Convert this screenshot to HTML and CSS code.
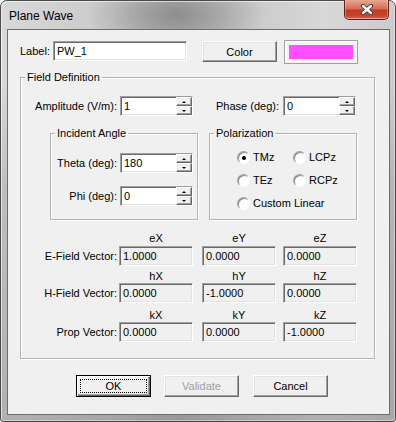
FILE: index.html
```html
<!DOCTYPE html>
<html lang="en">
<head>
    <meta charset="UTF-8">
    <title>Plane Wave</title>
    <link rel="stylesheet" href="styles.css">
</head>
<body>

    <div class="window">
        <div class="titlebar">
            <span class="title">Plane Wave</span>
            <div class="close">
                <svg width="14" height="11" viewBox="0 0 14 11">
                    <path d="M3 2 L11 9 M11 2 L3 9" stroke="#3b3b3b" stroke-width="4.2" stroke-linecap="round"/>
                    <path d="M3 2 L11 9 M11 2 L3 9" stroke="#ffffff" stroke-width="2.4" stroke-linecap="round"/>
                </svg>
            </div>
        </div>

        <div class="client">
            <div class="top-row">
                <span class="lbl lbl-label">Label:</span>
                <div class="edit edit-label">PW_1</div>
                <div class="btn btn-color">Color</div>
                <div class="swatch"><div class="swatch-fill"></div></div>
            </div>

            <fieldset class="group field-def">
                <legend>Field Definition</legend>

                <div class="amp-row">
                    <span class="lbl lbl-amp">Amplitude (V/m):</span>
                    <div class="edit spin">
                        <span class="spin-val">1</span>
                        <div class="spin-btns">
                            <div class="spin-btn"><i class="arrow-up"></i></div>
                            <div class="spin-btn"><i class="arrow-down"></i></div>
                        </div>
                    </div>
                    <span class="lbl lbl-phase">Phase (deg):</span>
                    <div class="edit spin spin-phase">
                        <span class="spin-val">0</span>
                        <div class="spin-btns">
                            <div class="spin-btn"><i class="arrow-up"></i></div>
                            <div class="spin-btn"><i class="arrow-down"></i></div>
                        </div>
                    </div>
                </div>

                <div class="group-row">
                    <fieldset class="group incident">
                        <legend>Incident Angle</legend>
                        <div class="ia-row">
                            <span class="lbl lbl-ia">Theta (deg):</span>
                            <div class="edit spin">
                                <span class="spin-val">180</span>
                                <div class="spin-btns">
                                    <div class="spin-btn"><i class="arrow-up"></i></div>
                                    <div class="spin-btn"><i class="arrow-down"></i></div>
                                </div>
                            </div>
                        </div>
                        <div class="ia-row">
                            <span class="lbl lbl-ia">Phi (deg):</span>
                            <div class="edit spin">
                                <span class="spin-val">0</span>
                                <div class="spin-btns">
                                    <div class="spin-btn"><i class="arrow-up"></i></div>
                                    <div class="spin-btn"><i class="arrow-down"></i></div>
                                </div>
                            </div>
                        </div>
                    </fieldset>

                    <fieldset class="group polar">
                        <legend>Polarization</legend>
                        <div class="radios">
                            <div class="radio"><span class="dot checked"></span>TMz</div>
                            <div class="radio"><span class="dot"></span>LCPz</div>
                            <div class="radio"><span class="dot"></span>TEz</div>
                            <div class="radio"><span class="dot"></span>RCPz</div>
                            <div class="radio wide"><span class="dot"></span>Custom Linear</div>
                        </div>
                    </fieldset>
                </div>

                <div class="vec-head head-e">
                    <span></span><span>eX</span><span>eY</span><span>eZ</span>
                </div>
                <div class="vec-row">
                    <span class="vec-lbl">E-Field Vector:</span>
                    <div class="edit ro">1.0000</div>
                    <div class="edit ro">0.0000</div>
                    <div class="edit ro">0.0000</div>
                </div>

                <div class="vec-head head-h">
                    <span></span><span>hX</span><span>hY</span><span>hZ</span>
                </div>
                <div class="vec-row">
                    <span class="vec-lbl">H-Field Vector:</span>
                    <div class="edit ro">0.0000</div>
                    <div class="edit ro">-1.0000</div>
                    <div class="edit ro">0.0000</div>
                </div>

                <div class="vec-head head-k">
                    <span></span><span>kX</span><span>kY</span><span>kZ</span>
                </div>
                <div class="vec-row">
                    <span class="vec-lbl">Prop Vector:</span>
                    <div class="edit ro">0.0000</div>
                    <div class="edit ro">0.0000</div>
                    <div class="edit ro">-1.0000</div>
                </div>
            </fieldset>

            <div class="btn-row">
                <div class="btn btn-default"><span class="focus">OK</span></div>
                <div class="btn btn-disabled">Validate</div>
                <div class="btn btn-cancel">Cancel</div>
            </div>
        </div>
    </div>

</body>
</html>
```

FILE: styles.css
```css
body {
    margin: 0;
    font-family: "Liberation Sans", Arial, sans-serif;
    font-size: 11px;
    color: #000;
    background: #fff;
}

/* window frame */
.window {
    width: 396px;
    height: 422px;
    box-sizing: border-box;
    border: 1px solid #4a4a4a;
    border-radius: 7px 7px 3px 3px;
    padding: 0 5px 6px 6px;
    display: flex;
    flex-direction: column;
    background:
        radial-gradient(ellipse 90px 40px at 175px 14px, rgba(135, 135, 135, 0.85), rgba(135, 135, 135, 0)),
        linear-gradient(to bottom, rgba(0, 0, 0, 0) 20%, rgba(0, 0, 0, 0.12) 45%, rgba(0, 0, 0, 0.18)),
        linear-gradient(to right, #d8d8d8, #cacaca 28%, #b8b8b8 45%, #c9c9c9 62%, #d8d8d8 82%, #cccccc);
    box-shadow: inset 1px 1px rgba(255, 255, 255, 0.6), inset -1px -1px rgba(255, 255, 255, 0.4);
}
.titlebar {
    height: 28px;
    display: flex;
    align-items: flex-start;
}
.title {
    font-size: 12px;
    line-height: 14px;
    margin: 8px 0 0 2px;
    color: #000;
}
.close {
    margin: -1px 1px 0 auto;
    width: 45px;
    height: 20px;
    box-sizing: border-box;
    border: 1px solid #5e2218;
    border-top: none;
    border-radius: 0 0 5px 5px;
    background: linear-gradient(to bottom, #e7a796, #d36e58 45%, #c23a22 55%, #c8462c 85%, #d9735a);
    box-shadow: inset 0 -1px rgba(255, 255, 255, 0.35), inset 1px 0 rgba(255, 255, 255, 0.3), inset -1px 0 rgba(255, 255, 255, 0.3);
    display: flex;
    align-items: center;
    justify-content: center;
}
.client {
    flex: 1;
    border: 1px solid #6e6e6e;
    background: #f0f0f0;
}

/* common controls */
.lbl {
    line-height: 20px;
    white-space: nowrap;
}
.edit {
    height: 20px;
    box-sizing: border-box;
    border: 1px solid;
    border-color: #a0a0a0 #fff #fff #a0a0a0;
    box-shadow: inset 1px 1px #696969, inset -1px -1px #e3e3e3;
    background: #fff;
    padding: 0 3px;
    line-height: 18px;
    white-space: nowrap;
}
.edit.ro {
    background: #f0f0f0;
    width: 74px;
}
.btn {
    height: 22px;
    box-sizing: border-box;
    width: 75px;
    border: 1px solid;
    border-color: #fff #696969 #696969 #fff;
    box-shadow: inset -1px -1px #a0a0a0, inset 1px 1px #e3e3e3;
    background: #f0f0f0;
    display: flex;
    align-items: center;
    justify-content: center;
}
.group {
    margin: 0;
    padding: 0;
    min-width: 0;
    box-sizing: border-box;
    border: 1px solid #b4b4b4;
    box-shadow: 1px 1px #fff, inset 1px 1px #fff;
}
.group legend {
    margin-left: 4px;
    padding: 0 2px;
    line-height: 13px;
}

/* label row */
.top-row {
    display: flex;
    align-items: flex-start;
    margin: 11px 0 0 12px;
}
.lbl-label {
    width: 33px;
}
.edit-label {
    width: 134px;
}
.btn-color {
    margin-left: 15px;
    height: 21px;
}
.swatch {
    margin: -1px 0 0 7px;
    width: 74px;
    height: 24px;
    box-sizing: border-box;
    border: 1px solid #a0a0a0;
    box-shadow: inset 1px 1px #fff;
    background: #f4f4f4;
    padding: 4px;
}
.swatch-fill {
    height: 100%;
    background: #ff4fff;
}

/* field definition */
.field-def {
    margin: 7px 0 0 12px;
    width: 355px;
    padding-bottom: 16px;
}
.amp-row {
    display: flex;
    margin-top: 12px;
}
.lbl-amp {
    width: 96px;
    text-align: right;
}
.lbl-phase {
    width: 86px;
    text-align: right;
}
.spin {
    width: 73px;
    margin-left: 3px;
    display: flex;
    padding-right: 0;
}
.spin-phase {
    margin-left: 4px;
}
.spin-val {
    flex: 1;
}
.spin-btns {
    width: 16px;
    display: flex;
    flex-direction: column;
}
.spin-btn {
    flex: 1;
    box-sizing: border-box;
    border: 1px solid;
    border-color: #fff #696969 #696969 #fff;
    box-shadow: inset -1px -1px #a0a0a0;
    background: #f0f0f0;
    display: flex;
    align-items: center;
    justify-content: center;
}
.arrow-up, .arrow-down {
    width: 0;
    height: 0;
    border-left: 2px solid transparent;
    border-right: 2px solid transparent;
}
.arrow-up {
    border-bottom: 2px solid #000;
}
.arrow-down {
    border-top: 2px solid #000;
}

/* incident angle / polarization */
.group-row {
    display: flex;
    margin-top: 11px;
}
.incident {
    margin-left: 29px;
    width: 148px;
    padding-bottom: 13px;
}
.ia-row {
    display: flex;
    margin-top: 13px;
}
.lbl-ia {
    width: 66px;
    text-align: right;
}
.polar {
    margin-left: 11px;
    width: 148px;
}
.radios {
    display: grid;
    grid-template-columns: 56px auto;
    row-gap: 10px;
    padding: 11px 0 0 27px;
}
.radio {
    display: flex;
    align-items: center;
    gap: 3px;
    line-height: 13px;
}
.radio.wide {
    grid-column: 1 / 3;
}
.dot {
    width: 13px;
    height: 13px;
    box-sizing: border-box;
    border-radius: 50%;
    border: 1px solid;
    border-color: #a0a0a0 #fff #fff #a0a0a0;
    box-shadow: inset 1px 1px #8a8a8a;
    background: #fff;
    display: flex;
    align-items: center;
    justify-content: center;
}
.dot.checked::before {
    content: "";
    width: 4px;
    height: 4px;
    border-radius: 50%;
    background: #000;
}

/* vectors */
.vec-head, .vec-row {
    display: grid;
    grid-template-columns: 98px 83px 81px 74px;
}
.vec-head {
    line-height: 13px;
}
.vec-head span {
    width: 74px;
    text-align: center;
}
.head-e {
    margin-top: 12px;
}
.head-e + .vec-row {
    margin-top: 1px;
}
.head-h {
    margin-top: 4px;
}
.head-k {
    margin-top: 6px;
}
.vec-lbl {
    text-align: right;
    padding-right: 2px;
    line-height: 20px;
    white-space: nowrap;
}

/* bottom buttons */
.btn-row {
    display: flex;
    margin: 16px 0 0 68px;
}
.btn-default {
    border: 1px solid #000;
    box-shadow: inset 1px 1px #fff, inset -1px -1px #696969, inset -2px -2px #a0a0a0;
    padding: 3px;
}
.btn-default .focus {
    flex: 1;
    align-self: stretch;
    border: 1px dotted #000;
    display: flex;
    align-items: center;
    justify-content: center;
}
.btn-disabled {
    margin-left: 13px;
    color: #a0a0a0;
}
.btn-cancel {
    margin-left: 14px;
}
```
